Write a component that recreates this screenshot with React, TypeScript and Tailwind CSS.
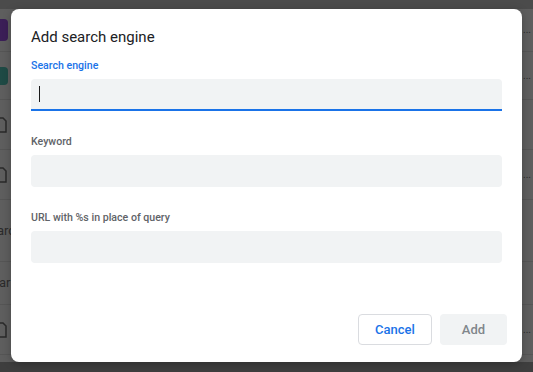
import { useState } from "react";

const rows = [
  { h: "h-[43px]", icon: "purple" },
  { h: "h-[48px]", icon: "teal" },
  { h: "h-[50px]", icon: "file" },
  { h: "h-[50px]", icon: "file" },
  { h: "h-[62px]", icon: "textA" },
  { h: "h-[43px]", icon: "textB" },
  { h: "h-[50px]", icon: "file" },
];

const RowIcon = ({ kind }: { kind: string }) => {
  if (kind === "purple") return <div className="h-[22px] w-[14px] -ml-[6px] rounded-sm bg-[#3b1f57]" />;
  if (kind === "teal") return <div className="h-[18px] w-[12px] -ml-[4px] rounded-sm bg-[#1f4a45]" />;
  if (kind === "file")
    return (
      <svg width="12" height="16" viewBox="0 0 12 16" className="-ml-[5px]">
        <path d="M1 1h7l3 3v11H1z" fill="none" stroke="#2a2a2a" strokeWidth="1.5" />
      </svg>
    );
  if (kind === "textA") return <span className="-ml-[3px] text-[13px] text-[#2b2b2b]">arc</span>;
  return <span className="-ml-[8px] text-[13px] text-[#2b2b2b]">ear</span>;
};

const Field = ({ label, active }: { label: string; active?: boolean }) => (
  <div className="flex flex-col">
    <label
      className={`text-[10.6px] font-medium leading-[14px] ${active ? "text-[#1a73e8]" : "text-[#5f6368]"}`}
    >
      {label}
    </label>
    <div
      className={`mt-[6px] flex h-[32px] items-center rounded-[4px] bg-[#f1f3f4] px-[8px] ${active ? "rounded-b-none border-b-2 border-[#1a73e8]" : ""}`}
    >
      {active && <div className="h-[16px] w-[1px] bg-[#1a1a1a]" />}
    </div>
  </div>
);

const App = () => {
  const [open] = useState(true);

  return (
    <div className="relative h-[372px] w-[533px] overflow-hidden bg-[#5e5e5e] font-['Roboto',sans-serif]">
      {/* dimmed page behind */}
      <div className="h-[9px] bg-[#4b4b4b]" />
      <div className="flex flex-col">
        {rows.map((r, i) => (
          <div key={i} className={`${r.h} flex items-center justify-between border-b border-[#555] pr-[2px]`}>
            <RowIcon kind={r.icon} />
            {[0, 1, 3, 6].includes(i) && <span className="text-[10px] leading-none text-[#2b2b2b]">...</span>}
          </div>
        ))}
      </div>
      <div className="absolute bottom-0 left-0 h-[10px] w-full bg-[#3e3e3e]" />

      {open && (
        <div className="absolute left-[11px] top-[9px] flex h-[353px] w-[511px] flex-col rounded-[8px] bg-white px-[20px] pb-[17px] pt-[18px] shadow-[0_2px_8px_rgba(0,0,0,0.25)]">
          <h2 className="text-[15px] leading-[20px] text-[#202124]">Add search engine</h2>
          <div className="mt-[12px] flex flex-col gap-[24px]">
            <Field label="Search engine" active />
            <Field label="Keyword" />
            <Field label="URL with %s in place of query" />
          </div>
          <div className="mt-auto -mr-[5px] flex justify-end gap-[8px]">
            <button className="h-[31px] w-[74px] rounded-[4px] border border-[#dadce0] bg-white text-[13px] font-medium text-[#1a73e8]">
              Cancel
            </button>
            <button className="h-[31px] w-[67px] rounded-[4px] bg-[#f1f3f4] text-[13px] font-medium text-[#80868b]">
              Add
            </button>
          </div>
        </div>
      )}
    </div>
  );
};

export default App;
